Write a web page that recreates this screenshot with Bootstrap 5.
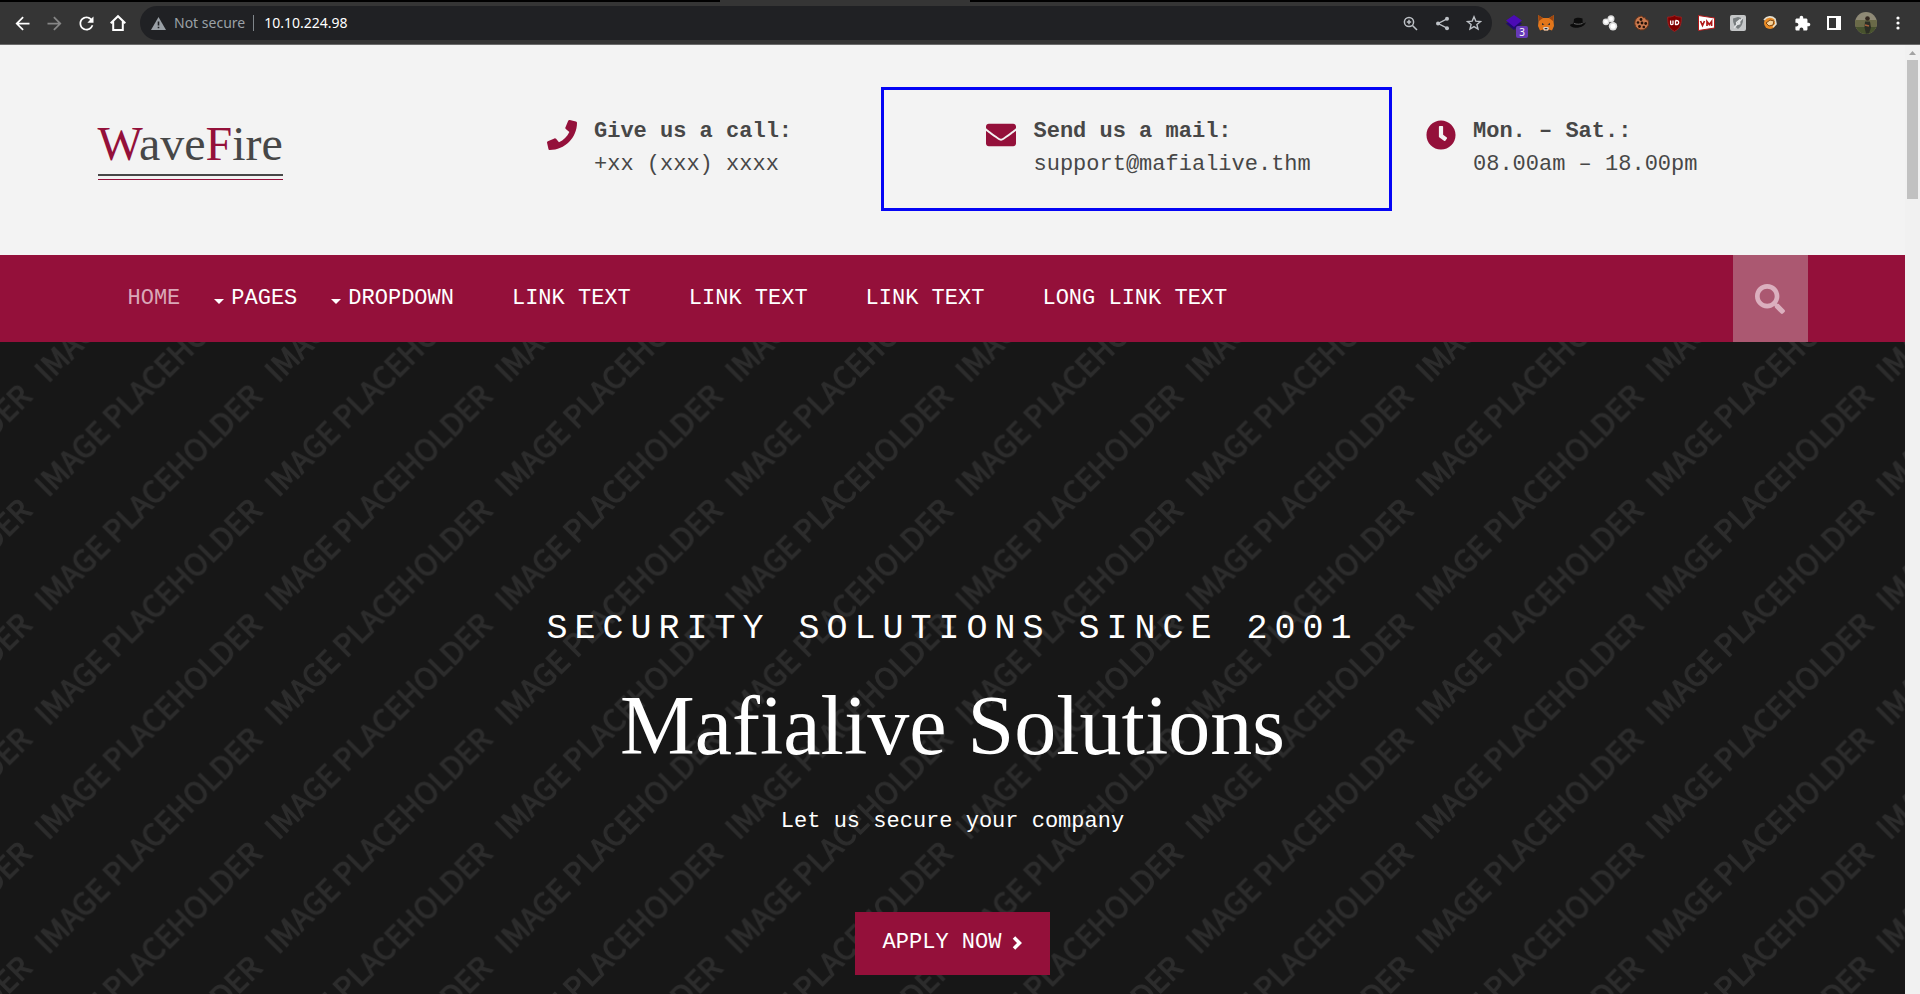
<!DOCTYPE html>
<html lang="en">
<head>
<meta charset="utf-8">
<meta name="viewport" content="width=device-width, initial-scale=1">
<title>WaveFire</title>
<link rel="stylesheet" href="https://cdn.jsdelivr.net/npm/bootstrap@5.3.0/dist/css/bootstrap.min.css">
<style>
  :root { --accent: #94103a; --ink: #474747; }
  body { font: 22px/33px "Liberation Mono", monospace; color: var(--ink); background: #f3f3f3; }
  svg { display: block; flex: none; }

  /* browser toolbar */
  .tab-strip { height: 2px; background: #000; }
  .tab-strip-active { width: 13%; margin-left: 37.5%; height: 2px; background: #353535; }
  .toolbar { height: 43px; padding: 0 6px; background: #353535; border-bottom: 1px solid #6a6a6a; font: 14px/18px "Noto Sans", sans-serif; }
  .tool-btn { width: 32px; height: 32px; padding: 0; border: 0; background: none; color: #fff; display: flex; align-items: center; justify-content: center; }
  .tool-btn:disabled { color: #868686; }
  .omnibox { height: 34px; margin: 0 6px; padding: 0 4px 0 11px; border-radius: 17px; background: #202124; color: #9aa0a6; }
  .omnibox .tool-btn { width: 28px; color: #bdc1c6; }
  .omnibox-rule { width: 1px; height: 16px; margin: 0 10px 0 8px; background: #80868b; }
  .omnibox input { min-width: 0; padding: 0; border: 0; background: none; color: #fff; outline: 0; }
  .ext-count { right: 2px; bottom: 1px; width: 12px; height: 12px; border-radius: 2px; background: #673ab7; color: #fff; font-size: 10px; line-height: 12px; }

  /* scrollbar column */
  .scroll-col { width: 15px; background: #f1f1f1; padding-top: 6px; }
  .scroll-thumb { width: 11px; height: 139px; margin-top: 5px; background: #c1c1c1; }

  /* site */
  .site-wrap { max-width: 1710px; width: 90%; margin: 0 auto; }
  .site-head { padding: 70px 0 74px; }
  .site-logo { position: relative; display: inline-block; font: 48px/58px "Liberation Serif", serif; color: var(--ink); text-decoration: none; padding-bottom: 1px; border-bottom: 2px solid var(--ink); }
  .site-logo span { color: var(--accent); }
  .site-logo::after { content: ""; position: absolute; left: 0; right: 0; bottom: -6px; height: 1px; background: var(--accent); }
  .contact-icon { width: 49px; padding-top: 5px; margin-right: 8px; color: var(--accent); display: flex; justify-content: center; }
  .mail-outline { left: -72px; right: 0; top: -28px; bottom: -30px; border: 3px solid #0505f5; pointer-events: none; }

  .site-nav { background: var(--accent); height: 87px; }
  .site-menu { gap: 58px; padding-left: 30px; }
  .site-menu a { color: #fff; text-decoration: none; text-transform: uppercase; white-space: nowrap; }
  .site-menu a.active { color: #daa7b8; }
  .site-menu .with-menu { margin-left: -24px; }
  .with-menu a { display: flex; align-items: center; gap: 7px; }
  .with-menu a::before { content: ""; border: 5px solid transparent; border-top-color: #fff; border-bottom: 0; margin-top: 6px; }
  .search-btn { width: 75px; border: 0; background: #ab5871; color: #dbafbe; display: flex; align-items: center; justify-content: center; }

  .hero { background: #171717; color: #fff; padding-top: 267px; }
  .hero-pattern text { font: 30px "Noto Sans CJK JP", sans-serif; fill: #2c2c2c; stroke: #2c2c2c; stroke-width: 1px; }
  .hero-over { font-size: 35px; line-height: 40px; letter-spacing: 7px; margin-bottom: 31px; }
  .hero-title { font: 84px/92px "Liberation Serif", serif; margin-bottom: 33px; }
  .hero-lead { margin-bottom: 74px; }
  .hero-btn { padding: 14px 28px 16px; background: var(--accent); color: #fff; text-decoration: none; gap: 11px; }
</style>
</head>
<body class="min-vh-100 d-flex flex-column">

<div class="tab-strip"><div class="tab-strip-active"></div></div>
<div class="toolbar d-flex align-items-center" role="toolbar" aria-label="Browser">
  <button class="tool-btn" aria-label="Back"><svg width="21" height="21" viewBox="0 0 24 24" fill="currentColor"><path d="M20 11H7.83l5.59-5.59L12 4l-8 8 8 8 1.41-1.41L7.83 13H20v-2z"/></svg></button>
  <button class="tool-btn" aria-label="Forward" disabled><svg width="21" height="21" viewBox="0 0 24 24" fill="currentColor"><path d="M4 11h12.17l-5.59-5.59L12 4l8 8-8 8-1.41-1.41L16.17 13H4z"/></svg></button>
  <button class="tool-btn" aria-label="Reload"><svg width="21" height="21" viewBox="0 0 24 24" fill="currentColor"><path d="M17.65 6.35C16.2 4.9 14.21 4 12 4c-4.42 0-7.99 3.58-7.99 8s3.57 8 7.99 8c3.73 0 6.84-2.55 7.73-6h-2.08c-.82 2.33-3.04 4-5.65 4-3.31 0-6-2.69-6-6s2.69-6 6-6c1.66 0 3.14.69 4.22 1.78L13 11h7V4l-2.35 2.35z"/></svg></button>
  <button class="tool-btn" aria-label="Home"><svg width="18" height="18" viewBox="0 0 18 18" fill="none" stroke="currentColor" stroke-width="2"><path d="M1.7 9.3 9 2.2l7.300 7.100M4.200 7.500V16h9.600V7.500"/></svg></button>
  <div class="omnibox d-flex align-items-center flex-grow-1">
    <svg class="me-2" width="15" height="15" viewBox="0 0 15 15"><path d="M7.500 1 15 14H0z" fill="#9aa0a6"/><path d="M7.500 5.500v4M7.500 10.700v1.600" stroke="#202124" stroke-width="1.600"/></svg>
    <label for="address">Not&nbsp;secure</label>
    <span class="omnibox-rule"></span>
    <input id="address" class="flex-grow-1" type="text" value="10.10.224.98">
    <div class="d-flex gap-1">
      <button class="tool-btn" aria-label="Zoom"><svg width="15" height="15" viewBox="0 0 15 15" fill="none" stroke="currentColor" stroke-width="1.500"><circle cx="6" cy="6" r="4.600"/><path d="m9.500 9.500 4.500 4.500M6 3.800v4.400M3.800 6h4.400"/></svg></button>
      <button class="tool-btn" aria-label="Share"><svg width="15" height="15" viewBox="0 0 15 15" fill="currentColor"><path d="M12 2.800 3.200 7.500 12 12.200" fill="none" stroke="currentColor" stroke-width="1.400"/><circle cx="12" cy="2.700" r="2"/><circle cx="3" cy="7.500" r="2"/><circle cx="12" cy="12.300" r="2"/></svg></button>
      <button class="tool-btn" aria-label="Bookmark"><svg width="16" height="16" viewBox="0 0 16 16" fill="none" stroke="currentColor" stroke-width="1.400"><path d="m8 1.800 1.800 4.300 4.700.4-3.600 3 1.100 4.500L8 11.600 4 14l1.100-4.500-3.600-3 4.700-.4z"/></svg></button>
    </div>
  </div>
  <button class="tool-btn position-relative" aria-label="Layers, 3"><svg width="16" height="16" viewBox="0 0 16 16"><path d="M0 8.500 8 4l8 4.500L8 15z" fill="#210a70"/><path d="m0 5.500 8-5.500 8 5.500L8 12z" fill="#4b0bb5"/></svg><span class="ext-count position-absolute">3</span></button>
  <button class="tool-btn" aria-label="Wallet"><svg width="16" height="16" viewBox="0 0 16 16"><path d="m0 0 5 3h6l5-3-.5 6 .5 5-2 4.500-3-1-1 1H6l-1-1-3 1L0 11l.6-5z" fill="#e2761b"/><path d="m0 0 5 3-4 3zM16 0l-5 3 4 3z" fill="#9b4510"/><path d="m5 13 1-1h4l1 1-1 2.500H6z" fill="#d9cfc9"/><path d="m4 8 2.500 1.500L4 10zM12 8 9.500 9.500 12 10zM6.500 13h3l-.5 1.200H7z" fill="#222b38"/></svg></button>
  <button class="tool-btn" aria-label="Hat"><svg width="16" height="12" viewBox="0 0 16 12"><path d="M0 8c1-1.500 3-1 3.500-1.500L4 2c2-1.600 6-1.600 8.500-.5l.2 4.700c1.300.1 2.800-.2 3.300-1.200C15 9 10 11 5.500 10.700 2.500 10.500.2 9.500 0 8z" fill="#0c0c0c"/><path d="M4 6.500c2.500 1 6 .9 8.500 0" stroke="#666" fill="none"/></svg></button>
  <button class="tool-btn" aria-label="Spheres"><svg width="16" height="16" viewBox="0 0 16 16" fill="#ddd"><circle cx="4" cy="6.800" r="3.400"/><circle cx="9" cy="3.800" r="3.500"/><circle cx="11" cy="11.300" r="4.200"/><g fill="#fff"><circle cx="4" cy="6.800" r="2"/><circle cx="9" cy="3.800" r="2"/><circle cx="11" cy="11.300" r="2.500"/></g></svg></button>
  <button class="tool-btn" aria-label="Cookies"><svg width="16" height="16" viewBox="0 0 16 16"><path d="M8 1c1 2 2 2 3 1 0 2 1 3 3 3a7 7 0 1 1-6-4z" fill="#c9794f" stroke="#6b3418"/><g fill="#23120a"><circle cx="7" cy="4.500" r="1.400"/><circle cx="4" cy="7.500" r="1.300"/><circle cx="8" cy="8" r="1.400"/><circle cx="11.700" cy="8.500" r="1.400"/><circle cx="5.500" cy="11.500" r="1.400"/><circle cx="9.800" cy="12" r="1.300"/></g></svg></button>
  <button class="tool-btn" aria-label="Shield"><svg width="15" height="17" viewBox="0 0 15 17"><path d="M7.500.5c2 1.300 4.500 1.600 6.800 1.600 0 7-.6 11-6.800 14.300C1.300 13.100.7 9.100.7 2.100 3 2.100 5.500 1.800 7.500.5z" fill="#800000" stroke="#9b2020"/><path d="M3.600 5.500v3q0 1.200 1.200 1.200T6 8.500v-3M8.500 5.500v4q3.200.2 3.200-2t-3.200-2" fill="none" stroke="#fff" stroke-width="1.300"/></svg></button>
  <button class="tool-btn" aria-label="VM"><svg width="17" height="16" viewBox="0 0 17 16"><path d="M.5.500 16.500 3v10L.5 15.500z" fill="#fff" stroke="#b01818"/><path d="m2.500 6 2 4.500 2-4.500M9 11V6.500l2.300 3 2.300-3V11" fill="none" stroke="#b01818" stroke-width="1.700"/></svg></button>
  <button class="tool-btn" aria-label="Privacy"><svg width="16" height="16" viewBox="0 0 16 16"><rect width="16" height="16" rx="2" fill="#c4c6c7"/><path d="m8 2 5 1.500q.3 7-5 10.500Q2.700 10.500 3 3.500z" fill="#777c7e"/><path d="m4 13 8.500-10M6.500 7.500 9.500 5l.3 3.800-3 .8z" stroke="#e2e4e5" fill="none" stroke-width="1.300"/></svg></button>
  <button class="tool-btn" aria-label="Switcher"><svg width="14" height="14" viewBox="0 0 14 14"><circle cx="7" cy="7" r="6" fill="#e98b25"/><path d="M1 4c3-4 8-4 11-1l1 5-3 3" fill="none" stroke="#e5dfcf" stroke-width="1.600"/><path d="m3 7 4-3 4 1-1 4-4 1z" fill="#f5d29a" stroke="#7b4410"/></svg></button>
  <button class="tool-btn" aria-label="Extensions"><svg width="17" height="17" viewBox="0 0 24 24" fill="#fff"><path d="M20.500 11H19V7c0-1.100-.9-2-2-2h-4V3.500C13 2.120 11.880 1 10.500 1S8 2.120 8 3.500V5H4c-1.100 0-1.990.9-1.990 2v3.800H3.500c1.490 0 2.700 1.210 2.700 2.700s-1.210 2.700-2.700 2.700H2V20c0 1.100.9 2 2 2h3.800v-1.500c0-1.490 1.210-2.700 2.700-2.700s2.700 1.210 2.700 2.700V22H17c1.100 0 2-.9 2-2v-4h1.500c1.380 0 2.500-1.120 2.500-2.500S21.880 11 20.500 11z"/></svg></button>
  <button class="tool-btn" aria-label="Side panel"><svg width="14" height="14" viewBox="0 0 14 14"><path fill-rule="evenodd" fill="#fff" d="M0 0h14v14H0zM2 2v10h7V2z"/></svg></button>
  <button class="tool-btn" aria-label="Profile"><svg width="22" height="22" viewBox="0 0 22 22"><clipPath id="avatar"><circle cx="11" cy="11" r="11"/></clipPath><g clip-path="url(#avatar)"><path fill="#8f8a76" d="M0 0h22v22H0z"/><path fill="#6a6a48" d="M0 8h22v14H0z"/><path fill="#47522e" d="M0 15h22v7H0z"/><circle cx="12.500" cy="6.500" r="2.300" fill="#33271f"/><path d="M10 9.500h5l1 6-2 6h-3l-1.500-6z" fill="#2c2e25"/><path d="m10 13 4 1" stroke="#a8603c" stroke-width="1.500"/></g></svg></button>
  <button class="tool-btn" aria-label="Menu"><svg width="4" height="14" viewBox="0 0 4 14" fill="#fff"><circle cx="2" cy="2" r="1.600"/><circle cx="2" cy="7" r="1.600"/><circle cx="2" cy="12" r="1.600"/></svg></button>
</div>

<div class="d-flex flex-grow-1">
  <div class="d-flex flex-column flex-grow-1 overflow-hidden">
    <header class="site-head">
      <div class="site-wrap">
        <div class="row gx-5">
          <div class="col-3"><a class="site-logo" href="#"><span>W</span>ave<span>F</span>ire</a></div>
          <div class="col-3 d-flex">
            <div class="contact-icon"><svg width="30" height="30" viewBox="0 0 512 512" fill="currentColor"><path d="M493.400 24.600l-104-24c-11.300-2.600-22.900 3.300-27.500 13.900l-48 112c-4.200 9.800-1.400 21.300 6.900 28l60.600 49.600c-36 76.700-98.900 140.500-177.200 177.200l-49.600-60.600c-6.800-8.300-18.200-11.100-28-6.900l-112 48C3.900 366.500-2 378.100.6 389.400l24 104C27.100 504.200 36.700 512 48 512c256.100 0 464-207.500 464-464 0-11.200-7.700-20.900-18.600-23.400z"/></svg></div>
            <div><strong>Give us a call:</strong><br>+xx (xxx) xxxx</div>
          </div>
          <div class="col-3 d-flex position-relative">
            <div class="contact-icon"><svg width="30" height="30" viewBox="0 0 512 512" fill="currentColor"><path d="M502.300 190.800c3.900-3.100 9.700-.2 9.700 4.700V400c0 26.500-21.500 48-48 48H48c-26.500 0-48-21.500-48-48V195.600c0-5 5.700-7.800 9.700-4.700 22.400 17.400 52.100 39.500 154.100 113.600 21.100 15.400 56.700 47.800 92.200 47.600 35.700.3 72-32.800 92.300-47.600 102-74.100 131.600-96.300 154-113.700zM256 320c23.200.4 56.600-29.200 73.400-41.400 132.700-96.300 142.800-104.700 173.400-128.700 5.800-4.500 9.200-11.500 9.200-18.900v-19c0-26.500-21.500-48-48-48H48c-26.500 0-48 21.500-48 48v19c0 7.400 3.400 14.300 9.200 18.900 30.600 23.900 40.700 32.400 173.400 128.700 16.800 12.200 50.200 41.800 73.400 41.400z"/></svg></div>
            <div><strong>Send us a mail:</strong><br>support@mafialive.thm</div>
            <div class="mail-outline position-absolute"></div>
          </div>
          <div class="col-3 d-flex">
            <div class="contact-icon"><svg width="30" height="30" viewBox="0 0 512 512" fill="currentColor"><path d="M256 8C119 8 8 119 8 256s111 248 248 248 248-111 248-248S393 8 256 8zm57.100 350.100L224.900 294c-3.100-2.300-4.900-5.900-4.900-9.700V116c0-6.600 5.400-12 12-12h48c6.600 0 12 5.400 12 12v137.700l63.500 46.200c5.400 3.900 6.500 11.400 2.600 16.800l-28.200 38.800c-3.900 5.300-11.400 6.500-16.800 2.600z"/></svg></div>
            <div><strong>Mon. – Sat.:</strong><br>08.00am – 18.00pm</div>
          </div>
        </div>
      </div>
    </header>

    <nav class="site-nav">
      <div class="site-wrap d-flex justify-content-between h-100">
        <ul class="site-menu list-unstyled d-flex align-items-center mb-0">
          <li><a class="active" href="#">Home</a></li>
          <li class="with-menu"><a href="#">Pages</a></li>
          <li class="with-menu"><a href="#">Dropdown</a></li>
          <li><a href="#">Link Text</a></li>
          <li><a href="#">Link Text</a></li>
          <li><a href="#">Link Text</a></li>
          <li><a href="#">Long Link Text</a></li>
        </ul>
        <button class="search-btn" aria-label="Search"><svg width="30" height="30" viewBox="0 0 512 512" fill="currentColor"><path d="M505 442.700L405.300 343c-4.500-4.500-10.600-7-17-7H372c27.600-35.300 44-79.700 44-128C416 93.100 322.900 0 208 0S0 93.100 0 208s93.100 208 208 208c48.300 0 92.700-16.400 128-44v16.300c0 6.400 2.500 12.500 7 17l99.700 99.700c9.400 9.400 24.600 9.400 33.900 0l28.300-28.300c9.400-9.400 9.400-24.600.1-34zM208 336c-70.700 0-128-57.200-128-128 0-70.700 57.200-128 128-128 70.700 0 128 57.200 128 128 0 70.700-57.200 128-128 128z"/></svg></button>
      </div>
    </nav>

    <main class="hero position-relative flex-grow-1 text-center">
      <!-- one diagonal label, repeated so that neighbours flow across the tile edges -->
      <svg class="hero-pattern position-absolute top-0 start-0 w-100 h-100" aria-hidden="true">
        <defs>
          <pattern id="placeholder" width="230.200" height="114.300" patternUnits="userSpaceOnUse">
            <text id="label" transform="translate(48 156) rotate(-44.800)">IMAGE PLACEHOLDER</text>
            <use href="#label" y="-114.300"/>
            <use href="#label" y="114.300"/>
            <use href="#label" x="-230.200" y="-114.300"/>
            <use href="#label" x="-230.200"/>
            <use href="#label" x="-230.200" y="114.300"/>
            <use href="#label" x="-230.200" y="228.600"/>
          </pattern>
        </defs>
        <rect width="100%" height="100%" fill="url(#placeholder)"/>
      </svg>
      <div class="position-relative">
        <p class="hero-over">SECURITY SOLUTIONS SINCE 2001</p>
        <h1 class="hero-title">Mafialive Solutions</h1>
        <p class="hero-lead">Let us secure your company</p>
        <a class="hero-btn d-inline-flex align-items-center" href="#">APPLY NOW
          <svg width="10" height="14" viewBox="0 0 10 14" fill="none" stroke="currentColor" stroke-width="3.500"><path d="m2 1.500 5.500 5.500L2 12.500"/></svg>
        </a>
      </div>
    </main>
  </div>
  <div class="scroll-col d-flex flex-column align-items-center" aria-hidden="true">
    <svg width="7" height="4" viewBox="0 0 7 4"><path d="M3.500 0 7 4H0z" fill="#a3a3a3"/></svg>
    <div class="scroll-thumb"></div>
  </div>
</div>

<script src="https://cdn.jsdelivr.net/npm/bootstrap@5.3.0/dist/js/bootstrap.bundle.min.js"></script>
</body>
</html>
